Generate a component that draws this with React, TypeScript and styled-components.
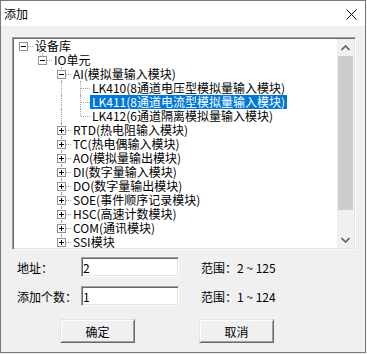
import React from 'react'
import styled, { createGlobalStyle } from "styled-components";

type Guide = 'none' | 'pipe' | 'tee' | 'elbow' | 'root';

interface TreeRow {
    label: string;
    guides: Guide[];
    box?: 'minus' | 'plus';
    selected?: boolean;
}

const rows: TreeRow[] = [
    { label: '设备库', guides: ['root'], box: 'minus' },
    { label: 'IO单元', guides: ['none', 'elbow'], box: 'minus' },
    { label: 'AI(模拟量输入模块)', guides: ['none', 'none', 'tee'], box: 'minus' },
    { label: 'LK410(8通道电压型模拟量输入模块)', guides: ['none', 'none', 'pipe', 'tee'] },
    { label: 'LK411(8通道电流型模拟量输入模块)', guides: ['none', 'none', 'pipe', 'tee'], selected: true },
    { label: 'LK412(6通道隔离模拟量输入模块)', guides: ['none', 'none', 'pipe', 'elbow'] },
    { label: 'RTD(热电阻输入模块)', guides: ['none', 'none', 'tee'], box: 'plus' },
    { label: 'TC(热电偶输入模块)', guides: ['none', 'none', 'tee'], box: 'plus' },
    { label: 'AO(模拟量输出模块)', guides: ['none', 'none', 'tee'], box: 'plus' },
    { label: 'DI(数字量输入模块)', guides: ['none', 'none', 'tee'], box: 'plus' },
    { label: 'DO(数字量输出模块)', guides: ['none', 'none', 'tee'], box: 'plus' },
    { label: 'SOE(事件顺序记录模块)', guides: ['none', 'none', 'tee'], box: 'plus' },
    { label: 'HSC(高速计数模块)', guides: ['none', 'none', 'tee'], box: 'plus' },
    { label: 'COM(通讯模块)', guides: ['none', 'none', 'tee'], box: 'plus' },
    { label: 'SSI模块', guides: ['none', 'none', 'tee'], box: 'plus' },
];

export default function App() {
    return (
        <>
            <GlobalStyle />
            <Window>
                <TitleBar>
                    <Title>添加</Title>
                    <CloseIcon width="11" height="11" viewBox="0 0 11 11">
                        <path d="M0.5 0.5 L10.5 10.5 M10.5 0.5 L0.5 10.5" stroke="#000" strokeWidth="1" fill="none" />
                    </CloseIcon>
                </TitleBar>
                <Body>
                    <TreeBox>
                        <TreeList>
                            {rows.map((row, index) => (
                                <Row key={index}>
                                    {row.guides.map((g, i) => (
                                        <GuideCell key={i} $kind={g}>
                                            {i === row.guides.length - 1 && row.box && (
                                                <Expander>
                                                    <ExpH />
                                                    {row.box === 'plus' && <ExpV />}
                                                </Expander>
                                            )}
                                        </GuideCell>
                                    ))}
                                    <Label $selected={row.selected}>{row.label}</Label>
                                </Row>
                            ))}
                        </TreeList>
                        <ScrollBar>
                            <ScrollButton>
                                <svg width="9" height="6" viewBox="0 0 9 6">
                                    <path d="M0.5 5 L4.5 1 L8.5 5" stroke="#606060" strokeWidth="1.6" fill="none" />
                                </svg>
                            </ScrollButton>
                            <Track>
                                <Thumb />
                            </Track>
                            <ScrollButton>
                                <svg width="9" height="6" viewBox="0 0 9 6">
                                    <path d="M0.5 1 L4.5 5 L8.5 1" stroke="#606060" strokeWidth="1.6" fill="none" />
                                </svg>
                            </ScrollButton>
                        </ScrollBar>
                    </TreeBox>
                    <Form>
                        <FieldLabel>地址：</FieldLabel>
                        <Input defaultValue="2" />
                        <RangeText>范围：2 ~ 125</RangeText>
                        <FieldLabel>添加个数：</FieldLabel>
                        <Input defaultValue="1" />
                        <RangeText>范围：1 ~ 124</RangeText>
                    </Form>
                    <ButtonRow>
                        <Button>确定</Button>
                        <Button>取消</Button>
                    </ButtonRow>
                </Body>
            </Window>
        </>
    );
}

const GlobalStyle = createGlobalStyle`
    html, body {
        margin: 0;
        padding: 0;
        background: #f0f0f0;
    }
    body {
        font-family: "Noto Sans CJK SC", "Noto Sans", sans-serif;
        font-size: 12px;
        color: #000;
    }
`;

const Window = styled.div`
    width: 366px;
    height: 353px;
    box-sizing: border-box;
    border: 1px solid #7a7a7a;
    background: #f0f0f0;
    display: flex;
    flex-direction: column;
`;

const TitleBar = styled.div`
    height: 25px;
    flex: none;
    background: #fff;
    display: flex;
    align-items: center;
    justify-content: space-between;
    padding: 0 8px 0 3px;
`;

const Title = styled.div`
    font-size: 12px;
    line-height: 14px;
`;

const CloseIcon = styled.svg`
    display: block;
    margin-top: 1px;
`;

const Body = styled.div`
    padding: 11px 10px 0 11px;
    display: flex;
    flex-direction: column;
`;

const TreeBox = styled.div`
    width: 344px;
    height: 213px;
    box-sizing: border-box;
    border: 1px solid;
    border-color: #a0a0a0 #fff #fff #a0a0a0;
    box-shadow: inset 1px 1px #696969, inset -1px -1px #e3e3e3;
    background: #fff;
    padding: 1px;
    display: flex;
    overflow: hidden;
`;

const TreeList = styled.div`
    flex: 1;
    overflow: hidden;
    display: flex;
    flex-direction: column;
`;

const Row = styled.div`
    display: flex;
    height: 14px;
    flex: none;
    align-items: stretch;
`;

const GuideCell = styled.span<{ $kind: Guide }>`
    position: relative;
    width: 19px;
    flex: none;

    &::before {
        content: '';
        position: absolute;
        left: 9px;
        top: 0;
        height: ${p => (p.$kind === 'pipe' || p.$kind === 'tee') ? '14px' : p.$kind === 'elbow' ? '7px' : '0'};
        border-left: ${p => (p.$kind === 'pipe' || p.$kind === 'tee' || p.$kind === 'elbow') ? '1px dotted #a0a0a0' : 'none'};
    }
    &::after {
        content: '';
        position: absolute;
        left: 10px;
        top: 7px;
        width: 9px;
        border-top: ${p => (p.$kind === 'tee' || p.$kind === 'elbow' || p.$kind === 'root') ? '1px dotted #a0a0a0' : 'none'};
    }
`;

const Expander = styled.span`
    position: absolute;
    left: 5px;
    top: 3px;
    width: 9px;
    height: 9px;
    box-sizing: border-box;
    border: 1px solid #919191;
    background: #fff;
    z-index: 1;
`;

const ExpH = styled.span`
    position: absolute;
    left: 1px;
    top: 3px;
    width: 5px;
    height: 1px;
    background: #000;
`;

const ExpV = styled.span`
    position: absolute;
    left: 3px;
    top: 1px;
    width: 1px;
    height: 5px;
    background: #000;
`;

const Label = styled.span<{ $selected?: boolean }>`
    padding: 0 2px;
    line-height: 14px;
    white-space: nowrap;
    background: ${p => p.$selected ? '#0078d7' : 'transparent'};
    color: ${p => p.$selected ? '#fff' : '#000'};
`;

const ScrollBar = styled.div`
    width: 17px;
    flex: none;
    background: #f0f0f0;
    display: flex;
    flex-direction: column;
`;

const ScrollButton = styled.div`
    height: 17px;
    flex: none;
    display: flex;
    align-items: center;
    justify-content: center;
`;

const Track = styled.div`
    flex: 1;
    padding: 0 1px;
`;

const Thumb = styled.div`
    height: 154px;
    background: #cdcdcd;
`;

const Form = styled.div`
    display: grid;
    grid-template-columns: 64px 120px auto;
    grid-auto-rows: 20px;
    row-gap: 9px;
    align-items: center;
    margin: 7px 0 0 5px;
`;

const FieldLabel = styled.div`
    font-size: 12px;
    white-space: nowrap;
`;

const Input = styled.input`
    width: 98px;
    height: 20px;
    box-sizing: border-box;
    border: 1px solid;
    border-color: #a0a0a0 #fff #fff #a0a0a0;
    box-shadow: inset 1px 1px #696969, inset -1px -1px #e3e3e3;
    background: #fff;
    padding: 0 1px;
    margin: 0;
    font-family: "Noto Sans CJK SC", "Noto Sans", sans-serif;
    font-size: 12px;
    outline: none;
`;

const RangeText = styled.div`
    font-size: 12px;
    white-space: nowrap;
`;

const ButtonRow = styled.div`
    display: flex;
    gap: 64px;
    margin: 13px 0 0 48px;
`;

const Button = styled.button`
    width: 75px;
    height: 24px;
    box-sizing: border-box;
    border: 1px solid;
    border-color: #e3e3e3 #696969 #696969 #e3e3e3;
    box-shadow: inset 1px 1px #fff, inset -1px -1px #a0a0a0;
    background: #f0f0f0;
    padding: 0;
    font-family: "Noto Sans CJK SC", "Noto Sans", sans-serif;
    font-size: 12px;
    color: #000;
`;
